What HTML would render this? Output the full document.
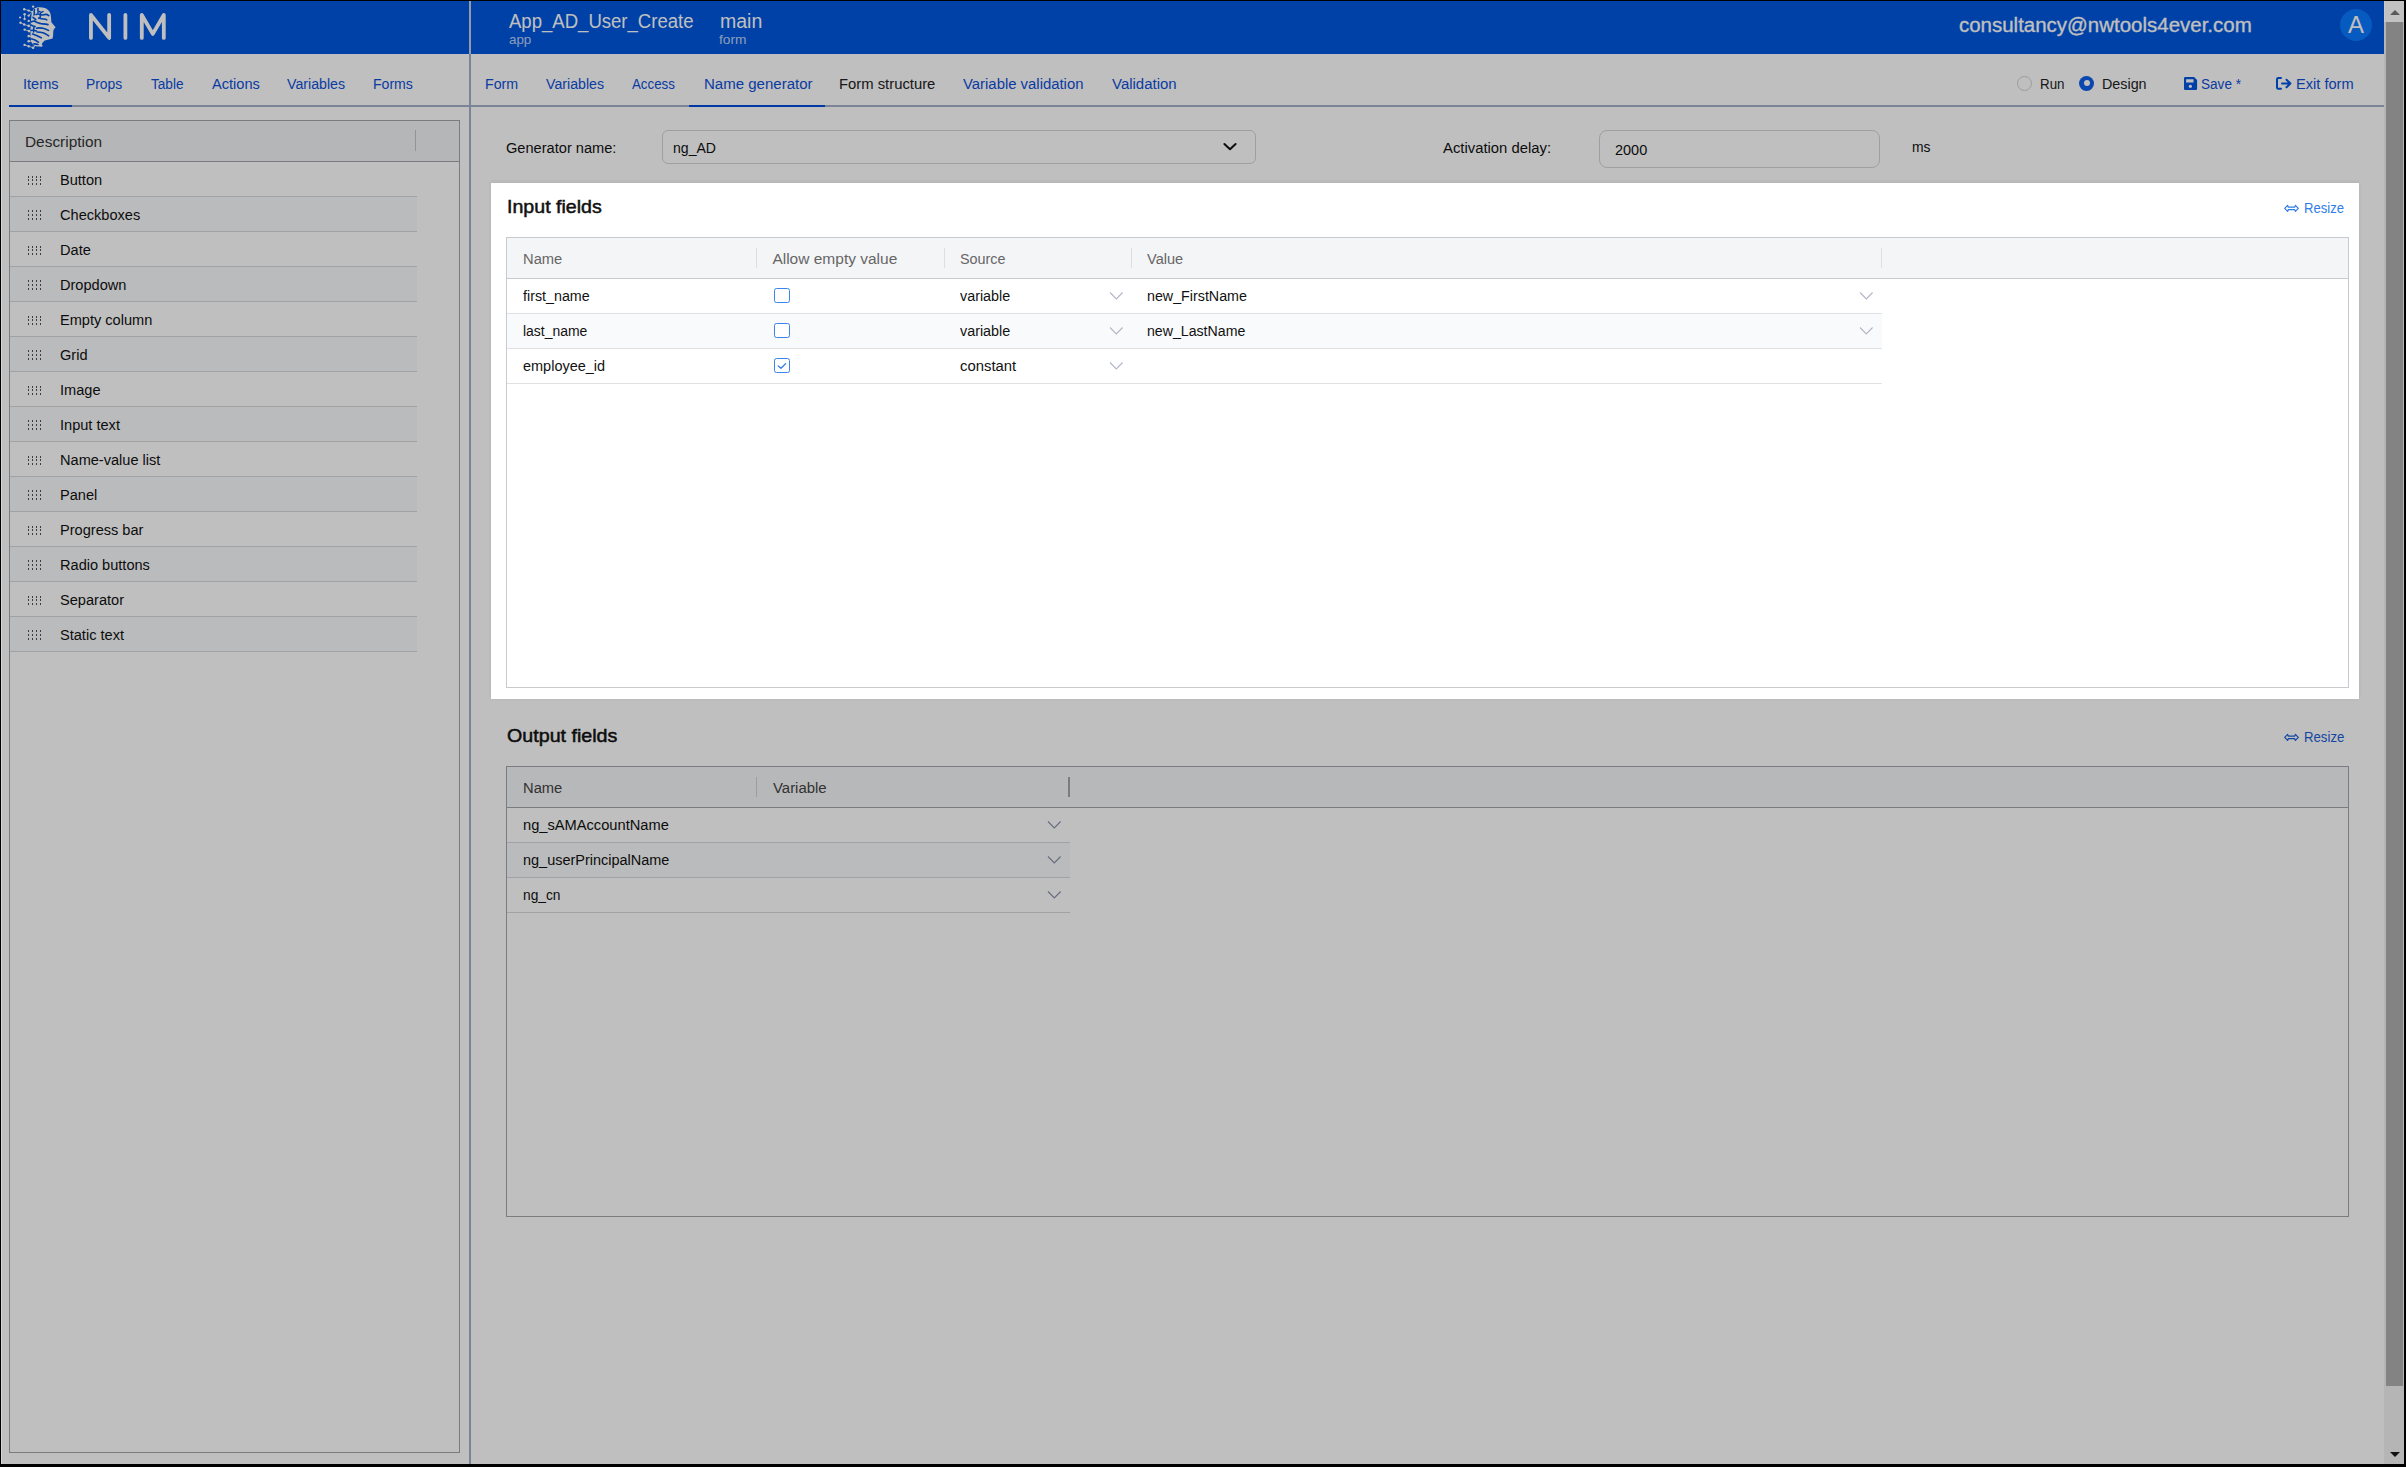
<!DOCTYPE html>
<html><head><meta charset="utf-8"><title>NIM</title>
<style>
html,body{margin:0;padding:0;}
body{width:2406px;height:1467px;background:#000;position:relative;overflow:hidden;font-family:"Liberation Sans",sans-serif;}
#pg{position:absolute;left:1px;top:1px;width:2403px;height:1463px;background:#fff;overflow:hidden;}
.r{position:absolute;box-sizing:content-box;}
.t{position:absolute;white-space:nowrap;line-height:20px;transform-origin:0 0;}
.ov{position:absolute;left:0;top:0;width:2406px;height:1467px;background:rgba(0,0,0,0.25);}
</style></head><body>
<div id="pg"></div>
<div class="r" style="left:1px;top:1px;width:2383px;height:53px;background:#0057e0"></div>
<svg class="r" style="left:0;top:0" width="200" height="56" viewBox="0 0 200 56">
<g fill="none" stroke="#fff" stroke-width="3.8" stroke-linecap="round" stroke-linejoin="round">
<polyline points="90.95,37.9 90.95,15 109.15,37.9 109.15,15"/>
<line x1="125.4" y1="15" x2="125.4" y2="37.9"/>
<polyline points="141.8,37.9 141.8,15 152.8,33.9 163.8,15 163.8,37.9"/>
</g>
<g fill="#fff">
<path d="M33.5,9 C36,6.8 41,6.6 45.5,8.2 C49.5,10 51,13.5 51,17.5 L51.4,22.3 L55.6,27.2 L53.7,29.4 L53.2,31.8 C53.3,34 53.1,36.8 52.6,38.4 L48.8,39.6 L44.8,40.6 L42.3,43 L41,46.5 L37,46.5 L33.5,45.5 L31,41.5 L30.5,36 L30.5,30 L30.8,22 L31.5,15 Z" />
<circle cx="33.1" cy="6.6" r="1.2"/><circle cx="24.2" cy="9.2" r="1.2"/><circle cx="28.7" cy="10.6" r="1.2"/><circle cx="32.7" cy="11.9" r="1.2"/>
<circle cx="24.6" cy="14.3" r="1.2"/><circle cx="28.7" cy="15.6" r="1.2"/><circle cx="20.1" cy="17.5" r="1.1"/><circle cx="24.6" cy="19" r="1.2"/>
<circle cx="28.7" cy="20.9" r="1.2"/><circle cx="20.5" cy="22.8" r="1.2"/><circle cx="24.2" cy="24.5" r="1.2"/><circle cx="28.7" cy="25.9" r="1.3"/>
<circle cx="24.6" cy="29.6" r="1.2"/><circle cx="29" cy="31.1" r="1.3"/><circle cx="28.7" cy="36.1" r="1.3"/><circle cx="28.7" cy="41.2" r="1.3"/>
<circle cx="24.6" cy="44.9" r="1.2"/><circle cx="28.7" cy="46.3" r="1.2"/><circle cx="33.1" cy="47.7" r="1.3"/><circle cx="41.3" cy="45.6" r="1.2"/>
</g>
<g stroke="#fff" stroke-width="0.8" fill="none">
<polyline points="24.2,9.2 28.7,10.6 32.7,11.9"/><polyline points="24.6,14.3 24.6,19"/><polyline points="28.7,15.6 32.7,11.9"/>
<polyline points="20.5,22.8 24.2,24.5 28.7,25.9"/><polyline points="24.6,29.6 29,31.1 32,30.5"/><polyline points="24.6,44.9 28.7,46.3 33.1,47.7 37,44"/>
<polyline points="28.7,36.1 32,37"/><polyline points="28.7,41.2 32,41"/>
</g>
<g stroke="#0057e0" stroke-width="1.6" fill="none" stroke-linecap="round">
<path d="M39.5,11.5 C40.5,12.5 42,12.3 43,11.5"/>
<path d="M36,14.5 C38,13 40,14.5 42,15 C44,15.2 45.5,12.8 48.8,15.6"/>
<path d="M38.5,18 C40,18.5 42,19 44,19 C45,19.1 46,19.4 46.8,19.9"/>
<path d="M33,17.3 L35.8,19.7"/>
<path d="M31,22 C32.5,21 33.5,21.5 34.4,21 C35.5,21.7 36.8,22.5 37.9,22.8 C39,23.2 40.2,23.6 41.3,23.8 C43.5,24 45.5,24.1 48,24.6"/>
<path d="M31,25 C32.5,26 33.5,26.3 35.1,26.5"/>
<path d="M36.5,28.2 C38,27.6 40,27.9 43,28.2 C45,28.5 46.5,29.3 48.6,30.4"/>
<path d="M31,30.5 C33,30 35,30.5 36.5,31"/>
<path d="M37,32 C39.5,32 41,32.2 43,32.7 C45,33.3 46.5,34.5 48.6,35.8"/>
<path d="M32.5,34 C34,34.5 36,35.3 37.2,35.7 C38.5,36.4 40,37.2 41.3,37.8"/>
<path d="M30,38.8 C31.5,39 33,39.4 34.4,39.8 C35.8,40.5 37.2,41.4 38.5,42.2"/>
<path d="M33.5,44 C35,43.5 36.5,44 38,44.5"/><path d="M34.5,9.5 C33.5,12 35,13 34,15"/><path d="M38,8.5 C37.5,10 38.5,11 38,12.5"/><path d="M34,27.5 C33,29 34.5,30 33.5,32"/><path d="M40.5,13.5 C39.8,15 40.8,16.2 40,17.5"/>
</g>
</svg>
<div class="r" style="left:469px;top:1px;width:2px;height:53px;background:#c9cedb"></div>
<div class="t" style="left:508.70px;top:11.24px;font-size:19.5px;color:#fff;transform:scaleX(0.9509);">App_AD_User_Create</div>
<div class="t" style="left:508.70px;top:30.02px;font-size:13.5px;color:rgba(255,255,255,0.74);transform:scaleX(0.9891);">app</div>
<div class="t" style="left:720.00px;top:11.24px;font-size:19.5px;color:#fff;">main</div>
<div class="t" style="left:719.40px;top:30.02px;font-size:13.5px;color:rgba(255,255,255,0.74);transform:scaleX(1.0185);">form</div>
<div class="t" style="left:1958.50px;top:14.77px;font-size:20px;color:#fff;transform:scaleX(1.0234);-webkit-text-stroke:0.3px #fff;">consultancy@nwtools4ever.com</div>
<div class="r" style="left:2340px;top:9px;width:32px;height:32px;border-radius:50%;background:#0a78ff"></div>
<div class="t" style="left:2348.20px;top:15.03px;font-size:23px;color:#fff;transform:scaleX(1.0383);">A</div>
<div class="r" style="left:469px;top:54px;width:2px;height:1410px;background:#a4afc8"></div>
<div class="r" style="left:9px;top:105px;width:460px;height:2px;background:#a4afc8"></div>
<div class="r" style="left:471px;top:105px;width:1913px;height:2px;background:#a4afc8"></div>
<div class="r" style="left:9px;top:105px;width:62.5px;height:2px;background:#004ddd"></div>
<div class="r" style="left:689px;top:105px;width:136px;height:2px;background:#004ddd"></div>
<div class="t" style="left:22.70px;top:73.63px;font-size:15.5px;color:#0d50d8;transform:scaleX(0.9367);">Items</div>
<div class="t" style="left:86.30px;top:73.63px;font-size:15.5px;color:#0d50d8;transform:scaleX(0.8948);">Props</div>
<div class="t" style="left:151.00px;top:73.63px;font-size:15.5px;color:#0d50d8;transform:scaleX(0.8773);">Table</div>
<div class="t" style="left:211.50px;top:73.63px;font-size:15.5px;color:#0d50d8;transform:scaleX(0.9422);">Actions</div>
<div class="t" style="left:287.30px;top:73.63px;font-size:15.5px;color:#0d50d8;transform:scaleX(0.9154);">Variables</div>
<div class="t" style="left:373.30px;top:73.63px;font-size:15.5px;color:#0d50d8;transform:scaleX(0.9080);">Forms</div>
<div class="t" style="left:485.00px;top:73.63px;font-size:15.5px;color:#0d50d8;transform:scaleX(0.9173);">Form</div>
<div class="t" style="left:546.30px;top:73.63px;font-size:15.5px;color:#0d50d8;transform:scaleX(0.9138);">Variables</div>
<div class="t" style="left:632.40px;top:73.63px;font-size:15.5px;color:#0d50d8;transform:scaleX(0.8582);">Access</div>
<div class="t" style="left:703.50px;top:73.63px;font-size:15.5px;color:#0d50d8;transform:scaleX(0.9689);">Name generator</div>
<div class="t" style="left:839.00px;top:73.63px;font-size:15.5px;color:#222;transform:scaleX(0.9558);">Form structure</div>
<div class="t" style="left:963.00px;top:73.63px;font-size:15.5px;color:#0d50d8;transform:scaleX(0.9598);">Variable validation</div>
<div class="t" style="left:1111.50px;top:73.63px;font-size:15.5px;color:#0d50d8;transform:scaleX(0.9662);">Validation</div>
<div class="t" style="left:2039.50px;top:73.63px;font-size:15.5px;color:#222;transform:scaleX(0.8614);">Run</div>
<div class="t" style="left:2102.40px;top:73.63px;font-size:15.5px;color:#222;transform:scaleX(0.9237);">Design</div>
<div class="t" style="left:2201.40px;top:73.63px;font-size:15.5px;color:#0d50d8;transform:scaleX(0.8763);">Save *</div>
<div class="t" style="left:2296.00px;top:73.63px;font-size:15.5px;color:#0d50d8;transform:scaleX(0.9420);">Exit form</div>
<div class="r" style="left:2016.8px;top:75.9px;width:13px;height:13px;border:1px solid #d0d0d0;border-radius:50%;background:#fff"></div>
<div class="r" style="left:2079px;top:75.9px;width:15px;height:15px;border-radius:50%;background:#0e5fe8"></div>
<div class="r" style="left:2083.5px;top:80.4px;width:6px;height:6px;border-radius:50%;background:#fff"></div>
<svg class="r" style="left:2184px;top:76.9px" width="14" height="13" viewBox="0 0 14 13">
<path fill="#0055e0" d="M1.2,0 H10 L13.1,3.1 V11.7 Q13.1,12.9 11.9,12.9 H1.2 Q0,12.9 0,11.7 V1.2 Q0,0 1.2,0 Z M2.1,2.3 V5.5 H9.5 V2.3 Z"/>
<circle cx="6.4" cy="9.3" r="1.6" fill="#fff"/>
</svg>
<svg class="r" style="left:2274px;top:75px" width="18" height="16" viewBox="0 0 18 16">
<g fill="none" stroke="#0055e0" stroke-width="2" stroke-linecap="round" stroke-linejoin="round">
<path d="M7,2.9 H4.3 Q3,2.9 3,4.2 V12.4 Q3,13.7 4.3,13.7 H7"/>
<path d="M8,8.5 H16.4 M12.5,4.8 L16.4,8.5 L12.5,12.2"/>
</g></svg>
<div class="r" style="left:9px;top:120px;width:449px;height:1331px;border:1px solid #a3a6aa;background:#fff"></div>
<div class="r" style="left:10px;top:121px;width:449px;height:40px;background:#f2f3f5"></div>
<div class="r" style="left:10px;top:161px;width:449px;height:1px;background:#a3a6aa"></div>
<div class="r" style="left:415px;top:130px;width:1px;height:21px;background:#c4c6ca"></div>
<div class="t" style="left:25.00px;top:132.03px;font-size:15.5px;color:#333;transform:scaleX(0.9935);">Description</div>
<div class="r" style="left:10px;top:196px;width:407px;height:1px;background:#d6d8db"></div>
<div class="r" style="left:28px;top:176px;width:1px;height:2px;background:#505050"></div>
<div class="r" style="left:28px;top:179px;width:1px;height:2px;background:#505050"></div>
<div class="r" style="left:28px;top:183px;width:1px;height:2px;background:#505050"></div>
<div class="r" style="left:32px;top:176px;width:1px;height:2px;background:#505050"></div>
<div class="r" style="left:32px;top:179px;width:1px;height:2px;background:#505050"></div>
<div class="r" style="left:32px;top:183px;width:1px;height:2px;background:#505050"></div>
<div class="r" style="left:36px;top:176px;width:1px;height:2px;background:#505050"></div>
<div class="r" style="left:36px;top:179px;width:1px;height:2px;background:#505050"></div>
<div class="r" style="left:36px;top:183px;width:1px;height:2px;background:#505050"></div>
<div class="r" style="left:40px;top:176px;width:1px;height:2px;background:#505050"></div>
<div class="r" style="left:40px;top:179px;width:1px;height:2px;background:#505050"></div>
<div class="r" style="left:40px;top:183px;width:1px;height:2px;background:#505050"></div>
<div class="t" style="left:59.80px;top:170.13px;font-size:15.5px;color:#111;transform:scaleX(0.9400);">Button</div>
<div class="r" style="left:10px;top:197px;width:407px;height:34px;background:#f9fafb"></div>
<div class="r" style="left:10px;top:231px;width:407px;height:1px;background:#d6d8db"></div>
<div class="r" style="left:28px;top:210px;width:1px;height:2px;background:#505050"></div>
<div class="r" style="left:28px;top:214px;width:1px;height:2px;background:#505050"></div>
<div class="r" style="left:28px;top:218px;width:1px;height:2px;background:#505050"></div>
<div class="r" style="left:32px;top:210px;width:1px;height:2px;background:#505050"></div>
<div class="r" style="left:32px;top:214px;width:1px;height:2px;background:#505050"></div>
<div class="r" style="left:32px;top:218px;width:1px;height:2px;background:#505050"></div>
<div class="r" style="left:36px;top:210px;width:1px;height:2px;background:#505050"></div>
<div class="r" style="left:36px;top:214px;width:1px;height:2px;background:#505050"></div>
<div class="r" style="left:36px;top:218px;width:1px;height:2px;background:#505050"></div>
<div class="r" style="left:40px;top:210px;width:1px;height:2px;background:#505050"></div>
<div class="r" style="left:40px;top:214px;width:1px;height:2px;background:#505050"></div>
<div class="r" style="left:40px;top:218px;width:1px;height:2px;background:#505050"></div>
<div class="t" style="left:59.80px;top:205.13px;font-size:15.5px;color:#111;transform:scaleX(0.9400);">Checkboxes</div>
<div class="r" style="left:10px;top:266px;width:407px;height:1px;background:#d6d8db"></div>
<div class="r" style="left:28px;top:246px;width:1px;height:2px;background:#505050"></div>
<div class="r" style="left:28px;top:249px;width:1px;height:2px;background:#505050"></div>
<div class="r" style="left:28px;top:253px;width:1px;height:2px;background:#505050"></div>
<div class="r" style="left:32px;top:246px;width:1px;height:2px;background:#505050"></div>
<div class="r" style="left:32px;top:249px;width:1px;height:2px;background:#505050"></div>
<div class="r" style="left:32px;top:253px;width:1px;height:2px;background:#505050"></div>
<div class="r" style="left:36px;top:246px;width:1px;height:2px;background:#505050"></div>
<div class="r" style="left:36px;top:249px;width:1px;height:2px;background:#505050"></div>
<div class="r" style="left:36px;top:253px;width:1px;height:2px;background:#505050"></div>
<div class="r" style="left:40px;top:246px;width:1px;height:2px;background:#505050"></div>
<div class="r" style="left:40px;top:249px;width:1px;height:2px;background:#505050"></div>
<div class="r" style="left:40px;top:253px;width:1px;height:2px;background:#505050"></div>
<div class="t" style="left:59.80px;top:240.13px;font-size:15.5px;color:#111;transform:scaleX(0.9400);">Date</div>
<div class="r" style="left:10px;top:267px;width:407px;height:34px;background:#f9fafb"></div>
<div class="r" style="left:10px;top:301px;width:407px;height:1px;background:#d6d8db"></div>
<div class="r" style="left:28px;top:280px;width:1px;height:2px;background:#505050"></div>
<div class="r" style="left:28px;top:284px;width:1px;height:2px;background:#505050"></div>
<div class="r" style="left:28px;top:288px;width:1px;height:2px;background:#505050"></div>
<div class="r" style="left:32px;top:280px;width:1px;height:2px;background:#505050"></div>
<div class="r" style="left:32px;top:284px;width:1px;height:2px;background:#505050"></div>
<div class="r" style="left:32px;top:288px;width:1px;height:2px;background:#505050"></div>
<div class="r" style="left:36px;top:280px;width:1px;height:2px;background:#505050"></div>
<div class="r" style="left:36px;top:284px;width:1px;height:2px;background:#505050"></div>
<div class="r" style="left:36px;top:288px;width:1px;height:2px;background:#505050"></div>
<div class="r" style="left:40px;top:280px;width:1px;height:2px;background:#505050"></div>
<div class="r" style="left:40px;top:284px;width:1px;height:2px;background:#505050"></div>
<div class="r" style="left:40px;top:288px;width:1px;height:2px;background:#505050"></div>
<div class="t" style="left:59.80px;top:275.13px;font-size:15.5px;color:#111;transform:scaleX(0.9400);">Dropdown</div>
<div class="r" style="left:10px;top:336px;width:407px;height:1px;background:#d6d8db"></div>
<div class="r" style="left:28px;top:316px;width:1px;height:2px;background:#505050"></div>
<div class="r" style="left:28px;top:319px;width:1px;height:2px;background:#505050"></div>
<div class="r" style="left:28px;top:323px;width:1px;height:2px;background:#505050"></div>
<div class="r" style="left:32px;top:316px;width:1px;height:2px;background:#505050"></div>
<div class="r" style="left:32px;top:319px;width:1px;height:2px;background:#505050"></div>
<div class="r" style="left:32px;top:323px;width:1px;height:2px;background:#505050"></div>
<div class="r" style="left:36px;top:316px;width:1px;height:2px;background:#505050"></div>
<div class="r" style="left:36px;top:319px;width:1px;height:2px;background:#505050"></div>
<div class="r" style="left:36px;top:323px;width:1px;height:2px;background:#505050"></div>
<div class="r" style="left:40px;top:316px;width:1px;height:2px;background:#505050"></div>
<div class="r" style="left:40px;top:319px;width:1px;height:2px;background:#505050"></div>
<div class="r" style="left:40px;top:323px;width:1px;height:2px;background:#505050"></div>
<div class="t" style="left:59.80px;top:310.13px;font-size:15.5px;color:#111;transform:scaleX(0.9400);">Empty column</div>
<div class="r" style="left:10px;top:337px;width:407px;height:34px;background:#f9fafb"></div>
<div class="r" style="left:10px;top:371px;width:407px;height:1px;background:#d6d8db"></div>
<div class="r" style="left:28px;top:350px;width:1px;height:2px;background:#505050"></div>
<div class="r" style="left:28px;top:354px;width:1px;height:2px;background:#505050"></div>
<div class="r" style="left:28px;top:358px;width:1px;height:2px;background:#505050"></div>
<div class="r" style="left:32px;top:350px;width:1px;height:2px;background:#505050"></div>
<div class="r" style="left:32px;top:354px;width:1px;height:2px;background:#505050"></div>
<div class="r" style="left:32px;top:358px;width:1px;height:2px;background:#505050"></div>
<div class="r" style="left:36px;top:350px;width:1px;height:2px;background:#505050"></div>
<div class="r" style="left:36px;top:354px;width:1px;height:2px;background:#505050"></div>
<div class="r" style="left:36px;top:358px;width:1px;height:2px;background:#505050"></div>
<div class="r" style="left:40px;top:350px;width:1px;height:2px;background:#505050"></div>
<div class="r" style="left:40px;top:354px;width:1px;height:2px;background:#505050"></div>
<div class="r" style="left:40px;top:358px;width:1px;height:2px;background:#505050"></div>
<div class="t" style="left:59.80px;top:345.13px;font-size:15.5px;color:#111;transform:scaleX(0.9400);">Grid</div>
<div class="r" style="left:10px;top:406px;width:407px;height:1px;background:#d6d8db"></div>
<div class="r" style="left:28px;top:386px;width:1px;height:2px;background:#505050"></div>
<div class="r" style="left:28px;top:389px;width:1px;height:2px;background:#505050"></div>
<div class="r" style="left:28px;top:393px;width:1px;height:2px;background:#505050"></div>
<div class="r" style="left:32px;top:386px;width:1px;height:2px;background:#505050"></div>
<div class="r" style="left:32px;top:389px;width:1px;height:2px;background:#505050"></div>
<div class="r" style="left:32px;top:393px;width:1px;height:2px;background:#505050"></div>
<div class="r" style="left:36px;top:386px;width:1px;height:2px;background:#505050"></div>
<div class="r" style="left:36px;top:389px;width:1px;height:2px;background:#505050"></div>
<div class="r" style="left:36px;top:393px;width:1px;height:2px;background:#505050"></div>
<div class="r" style="left:40px;top:386px;width:1px;height:2px;background:#505050"></div>
<div class="r" style="left:40px;top:389px;width:1px;height:2px;background:#505050"></div>
<div class="r" style="left:40px;top:393px;width:1px;height:2px;background:#505050"></div>
<div class="t" style="left:59.80px;top:380.13px;font-size:15.5px;color:#111;transform:scaleX(0.9400);">Image</div>
<div class="r" style="left:10px;top:407px;width:407px;height:34px;background:#f9fafb"></div>
<div class="r" style="left:10px;top:441px;width:407px;height:1px;background:#d6d8db"></div>
<div class="r" style="left:28px;top:420px;width:1px;height:2px;background:#505050"></div>
<div class="r" style="left:28px;top:424px;width:1px;height:2px;background:#505050"></div>
<div class="r" style="left:28px;top:428px;width:1px;height:2px;background:#505050"></div>
<div class="r" style="left:32px;top:420px;width:1px;height:2px;background:#505050"></div>
<div class="r" style="left:32px;top:424px;width:1px;height:2px;background:#505050"></div>
<div class="r" style="left:32px;top:428px;width:1px;height:2px;background:#505050"></div>
<div class="r" style="left:36px;top:420px;width:1px;height:2px;background:#505050"></div>
<div class="r" style="left:36px;top:424px;width:1px;height:2px;background:#505050"></div>
<div class="r" style="left:36px;top:428px;width:1px;height:2px;background:#505050"></div>
<div class="r" style="left:40px;top:420px;width:1px;height:2px;background:#505050"></div>
<div class="r" style="left:40px;top:424px;width:1px;height:2px;background:#505050"></div>
<div class="r" style="left:40px;top:428px;width:1px;height:2px;background:#505050"></div>
<div class="t" style="left:59.80px;top:415.13px;font-size:15.5px;color:#111;transform:scaleX(0.9400);">Input text</div>
<div class="r" style="left:10px;top:476px;width:407px;height:1px;background:#d6d8db"></div>
<div class="r" style="left:28px;top:456px;width:1px;height:2px;background:#505050"></div>
<div class="r" style="left:28px;top:459px;width:1px;height:2px;background:#505050"></div>
<div class="r" style="left:28px;top:463px;width:1px;height:2px;background:#505050"></div>
<div class="r" style="left:32px;top:456px;width:1px;height:2px;background:#505050"></div>
<div class="r" style="left:32px;top:459px;width:1px;height:2px;background:#505050"></div>
<div class="r" style="left:32px;top:463px;width:1px;height:2px;background:#505050"></div>
<div class="r" style="left:36px;top:456px;width:1px;height:2px;background:#505050"></div>
<div class="r" style="left:36px;top:459px;width:1px;height:2px;background:#505050"></div>
<div class="r" style="left:36px;top:463px;width:1px;height:2px;background:#505050"></div>
<div class="r" style="left:40px;top:456px;width:1px;height:2px;background:#505050"></div>
<div class="r" style="left:40px;top:459px;width:1px;height:2px;background:#505050"></div>
<div class="r" style="left:40px;top:463px;width:1px;height:2px;background:#505050"></div>
<div class="t" style="left:59.80px;top:450.13px;font-size:15.5px;color:#111;transform:scaleX(0.9400);">Name-value list</div>
<div class="r" style="left:10px;top:477px;width:407px;height:34px;background:#f9fafb"></div>
<div class="r" style="left:10px;top:511px;width:407px;height:1px;background:#d6d8db"></div>
<div class="r" style="left:28px;top:490px;width:1px;height:2px;background:#505050"></div>
<div class="r" style="left:28px;top:494px;width:1px;height:2px;background:#505050"></div>
<div class="r" style="left:28px;top:498px;width:1px;height:2px;background:#505050"></div>
<div class="r" style="left:32px;top:490px;width:1px;height:2px;background:#505050"></div>
<div class="r" style="left:32px;top:494px;width:1px;height:2px;background:#505050"></div>
<div class="r" style="left:32px;top:498px;width:1px;height:2px;background:#505050"></div>
<div class="r" style="left:36px;top:490px;width:1px;height:2px;background:#505050"></div>
<div class="r" style="left:36px;top:494px;width:1px;height:2px;background:#505050"></div>
<div class="r" style="left:36px;top:498px;width:1px;height:2px;background:#505050"></div>
<div class="r" style="left:40px;top:490px;width:1px;height:2px;background:#505050"></div>
<div class="r" style="left:40px;top:494px;width:1px;height:2px;background:#505050"></div>
<div class="r" style="left:40px;top:498px;width:1px;height:2px;background:#505050"></div>
<div class="t" style="left:59.80px;top:485.13px;font-size:15.5px;color:#111;transform:scaleX(0.9400);">Panel</div>
<div class="r" style="left:10px;top:546px;width:407px;height:1px;background:#d6d8db"></div>
<div class="r" style="left:28px;top:526px;width:1px;height:2px;background:#505050"></div>
<div class="r" style="left:28px;top:529px;width:1px;height:2px;background:#505050"></div>
<div class="r" style="left:28px;top:533px;width:1px;height:2px;background:#505050"></div>
<div class="r" style="left:32px;top:526px;width:1px;height:2px;background:#505050"></div>
<div class="r" style="left:32px;top:529px;width:1px;height:2px;background:#505050"></div>
<div class="r" style="left:32px;top:533px;width:1px;height:2px;background:#505050"></div>
<div class="r" style="left:36px;top:526px;width:1px;height:2px;background:#505050"></div>
<div class="r" style="left:36px;top:529px;width:1px;height:2px;background:#505050"></div>
<div class="r" style="left:36px;top:533px;width:1px;height:2px;background:#505050"></div>
<div class="r" style="left:40px;top:526px;width:1px;height:2px;background:#505050"></div>
<div class="r" style="left:40px;top:529px;width:1px;height:2px;background:#505050"></div>
<div class="r" style="left:40px;top:533px;width:1px;height:2px;background:#505050"></div>
<div class="t" style="left:59.80px;top:520.13px;font-size:15.5px;color:#111;transform:scaleX(0.9400);">Progress bar</div>
<div class="r" style="left:10px;top:547px;width:407px;height:34px;background:#f9fafb"></div>
<div class="r" style="left:10px;top:581px;width:407px;height:1px;background:#d6d8db"></div>
<div class="r" style="left:28px;top:560px;width:1px;height:2px;background:#505050"></div>
<div class="r" style="left:28px;top:564px;width:1px;height:2px;background:#505050"></div>
<div class="r" style="left:28px;top:568px;width:1px;height:2px;background:#505050"></div>
<div class="r" style="left:32px;top:560px;width:1px;height:2px;background:#505050"></div>
<div class="r" style="left:32px;top:564px;width:1px;height:2px;background:#505050"></div>
<div class="r" style="left:32px;top:568px;width:1px;height:2px;background:#505050"></div>
<div class="r" style="left:36px;top:560px;width:1px;height:2px;background:#505050"></div>
<div class="r" style="left:36px;top:564px;width:1px;height:2px;background:#505050"></div>
<div class="r" style="left:36px;top:568px;width:1px;height:2px;background:#505050"></div>
<div class="r" style="left:40px;top:560px;width:1px;height:2px;background:#505050"></div>
<div class="r" style="left:40px;top:564px;width:1px;height:2px;background:#505050"></div>
<div class="r" style="left:40px;top:568px;width:1px;height:2px;background:#505050"></div>
<div class="t" style="left:59.80px;top:555.13px;font-size:15.5px;color:#111;transform:scaleX(0.9400);">Radio buttons</div>
<div class="r" style="left:10px;top:616px;width:407px;height:1px;background:#d6d8db"></div>
<div class="r" style="left:28px;top:596px;width:1px;height:2px;background:#505050"></div>
<div class="r" style="left:28px;top:599px;width:1px;height:2px;background:#505050"></div>
<div class="r" style="left:28px;top:603px;width:1px;height:2px;background:#505050"></div>
<div class="r" style="left:32px;top:596px;width:1px;height:2px;background:#505050"></div>
<div class="r" style="left:32px;top:599px;width:1px;height:2px;background:#505050"></div>
<div class="r" style="left:32px;top:603px;width:1px;height:2px;background:#505050"></div>
<div class="r" style="left:36px;top:596px;width:1px;height:2px;background:#505050"></div>
<div class="r" style="left:36px;top:599px;width:1px;height:2px;background:#505050"></div>
<div class="r" style="left:36px;top:603px;width:1px;height:2px;background:#505050"></div>
<div class="r" style="left:40px;top:596px;width:1px;height:2px;background:#505050"></div>
<div class="r" style="left:40px;top:599px;width:1px;height:2px;background:#505050"></div>
<div class="r" style="left:40px;top:603px;width:1px;height:2px;background:#505050"></div>
<div class="t" style="left:59.80px;top:590.13px;font-size:15.5px;color:#111;transform:scaleX(0.9400);">Separator</div>
<div class="r" style="left:10px;top:617px;width:407px;height:34px;background:#f9fafb"></div>
<div class="r" style="left:10px;top:651px;width:407px;height:1px;background:#d6d8db"></div>
<div class="r" style="left:28px;top:630px;width:1px;height:2px;background:#505050"></div>
<div class="r" style="left:28px;top:634px;width:1px;height:2px;background:#505050"></div>
<div class="r" style="left:28px;top:638px;width:1px;height:2px;background:#505050"></div>
<div class="r" style="left:32px;top:630px;width:1px;height:2px;background:#505050"></div>
<div class="r" style="left:32px;top:634px;width:1px;height:2px;background:#505050"></div>
<div class="r" style="left:32px;top:638px;width:1px;height:2px;background:#505050"></div>
<div class="r" style="left:36px;top:630px;width:1px;height:2px;background:#505050"></div>
<div class="r" style="left:36px;top:634px;width:1px;height:2px;background:#505050"></div>
<div class="r" style="left:36px;top:638px;width:1px;height:2px;background:#505050"></div>
<div class="r" style="left:40px;top:630px;width:1px;height:2px;background:#505050"></div>
<div class="r" style="left:40px;top:634px;width:1px;height:2px;background:#505050"></div>
<div class="r" style="left:40px;top:638px;width:1px;height:2px;background:#505050"></div>
<div class="t" style="left:59.80px;top:625.13px;font-size:15.5px;color:#111;transform:scaleX(0.9400);">Static text</div>
<div class="t" style="left:506.20px;top:137.63px;font-size:15.5px;color:#111;transform:scaleX(0.9421);">Generator name:</div>
<div class="r" style="left:662px;top:130px;width:592px;height:32px;border:1px solid #d4d4d4;border-radius:6px;background:#fff"></div>
<div class="t" style="left:673.30px;top:137.63px;font-size:15.5px;color:#111;transform:scaleX(0.9066);">ng_AD</div>
<svg class="r" style="left:1221px;top:140px" width="18" height="12" viewBox="0 0 18 12">
<polyline points="3.4,4 9,9.3 14.6,4" fill="none" stroke="#111" stroke-width="2" stroke-linecap="round" stroke-linejoin="round"/></svg>
<div class="t" style="left:1443.00px;top:137.63px;font-size:15.5px;color:#111;transform:scaleX(0.9571);">Activation delay:</div>
<div class="r" style="left:1599px;top:130px;width:279px;height:36px;border:1px solid #d4d4d4;border-radius:8px;background:#fff"></div>
<div class="t" style="left:1614.50px;top:139.63px;font-size:15.5px;color:#111;transform:scaleX(0.9337);">2000</div>
<div class="t" style="left:1911.50px;top:137.33px;font-size:15.5px;color:#111;transform:scaleX(0.8940);">ms</div>
<div class="t" style="left:506.80px;top:725.99px;font-size:18.5px;color:#111;transform:scaleX(1.0628);-webkit-text-stroke:0.5px #111;">Output fields</div>
<svg class="r" style="left:2284px;top:733px" width="17" height="10" viewBox="0 0 17 10"><path d="M0.7,4.4 L3.6,1.4 L4.4,3.2 H10.6 L11.4,1.4 L14.3,4.4 L11.4,7.4 L10.6,5.6 H4.4 L3.6,7.4 Z" fill="none" stroke="#1a5ed8" stroke-width="1.2" stroke-linejoin="round"/></svg>
<div class="t" style="left:2303.50px;top:727.13px;font-size:15.5px;color:#1a5ed8;transform:scaleX(0.8511);">Resize</div>
<div class="r" style="left:506px;top:766px;width:1841px;height:449px;border:1px solid #a3a6aa;background:#fff"></div>
<div class="r" style="left:507px;top:767px;width:1841px;height:40px;background:#f5f6f8"></div>
<div class="r" style="left:507px;top:807px;width:1841px;height:1px;background:#a3a6aa"></div>
<div class="r" style="left:756px;top:777px;width:1px;height:20px;background:#d0d2d6"></div>
<div class="r" style="left:1068px;top:777px;width:2px;height:20px;background:#a3a6aa"></div>
<div class="t" style="left:522.70px;top:777.63px;font-size:15.5px;color:#444;transform:scaleX(0.9496);">Name</div>
<div class="t" style="left:772.60px;top:777.63px;font-size:15.5px;color:#444;transform:scaleX(0.9619);">Variable</div>
<div class="r" style="left:507px;top:842px;width:563px;height:1px;background:#d6d8db"></div>
<div class="t" style="left:522.70px;top:815.33px;font-size:15.5px;color:#111;transform:scaleX(0.9454);">ng_sAMAccountName</div>
<svg class="r" style="left:1047px;top:820px" width="15" height="10" viewBox="0 0 15 10"><polyline points="1,1.5 7.3,8 13.6,1.5" fill="none" stroke="#8890a8" stroke-width="1.1"/></svg>
<div class="r" style="left:507px;top:843px;width:563px;height:34px;background:#f9fafb"></div>
<div class="r" style="left:507px;top:877px;width:563px;height:1px;background:#d6d8db"></div>
<div class="t" style="left:522.70px;top:850.33px;font-size:15.5px;color:#111;transform:scaleX(0.9338);">ng_userPrincipalName</div>
<svg class="r" style="left:1047px;top:855px" width="15" height="10" viewBox="0 0 15 10"><polyline points="1,1.5 7.3,8 13.6,1.5" fill="none" stroke="#8890a8" stroke-width="1.1"/></svg>
<div class="r" style="left:507px;top:912px;width:563px;height:1px;background:#d6d8db"></div>
<div class="t" style="left:522.70px;top:885.33px;font-size:15.5px;color:#111;transform:scaleX(0.8878);">ng_cn</div>
<svg class="r" style="left:1047px;top:890px" width="15" height="10" viewBox="0 0 15 10"><polyline points="1,1.5 7.3,8 13.6,1.5" fill="none" stroke="#8890a8" stroke-width="1.1"/></svg>
<div class="ov"></div>
<div class="r" style="left:491px;top:183px;width:1868px;height:516px;background:#fff;box-shadow:0 -1px 4px rgba(0,0,0,0.07)"></div>
<div class="t" style="left:506.80px;top:196.89px;font-size:18.5px;color:#111;transform:scaleX(1.0598);-webkit-text-stroke:0.5px #111;">Input fields</div>
<svg class="r" style="left:2284px;top:204px" width="17" height="10" viewBox="0 0 17 10"><path d="M0.7,4.4 L3.6,1.4 L4.4,3.2 H10.6 L11.4,1.4 L14.3,4.4 L11.4,7.4 L10.6,5.6 H4.4 L3.6,7.4 Z" fill="none" stroke="#2e7de8" stroke-width="1.2" stroke-linejoin="round"/></svg>
<div class="t" style="left:2303.90px;top:198.43px;font-size:15.5px;color:#2e7de8;transform:scaleX(0.8426);">Resize</div>
<div class="r" style="left:506px;top:237px;width:1841px;height:449px;border:1px solid #c8cacd;background:#fff"></div>
<div class="r" style="left:507px;top:238px;width:1841px;height:40px;background:#f4f5f7"></div>
<div class="r" style="left:507px;top:278px;width:1841px;height:1px;background:#c8cacd"></div>
<div class="r" style="left:756px;top:248px;width:1px;height:20px;background:#dcdee1"></div>
<div class="r" style="left:944px;top:248px;width:1px;height:20px;background:#dcdee1"></div>
<div class="r" style="left:1131px;top:248px;width:1px;height:20px;background:#dcdee1"></div>
<div class="r" style="left:1881px;top:248px;width:1px;height:20px;background:#dcdee1"></div>
<div class="t" style="left:522.70px;top:249.13px;font-size:15.5px;color:#666;transform:scaleX(0.9496);">Name</div>
<div class="t" style="left:772.40px;top:249.13px;font-size:15.5px;color:#666;">Allow empty value</div>
<div class="t" style="left:959.80px;top:249.13px;font-size:15.5px;color:#666;transform:scaleX(0.9260);">Source</div>
<div class="t" style="left:1147.40px;top:249.13px;font-size:15.5px;color:#666;transform:scaleX(0.9398);">Value</div>
<div class="r" style="left:507px;top:313px;width:1375px;height:1px;background:#dfe1e4"></div>
<div class="t" style="left:522.70px;top:286.23px;font-size:15.5px;color:#111;transform:scaleX(0.9215);">first_name</div>
<div class="r" style="left:774px;top:287.5px;width:13.6px;height:13.6px;border:1.2px solid #3a84ee;border-radius:2.5px;background:#fff"></div>
<div class="t" style="left:959.80px;top:286.23px;font-size:15.5px;color:#111;transform:scaleX(0.9253);">variable</div>
<svg class="r" style="left:1109px;top:291px" width="15" height="10" viewBox="0 0 15 10"><polyline points="1,1.5 7.3,8 13.6,1.5" fill="none" stroke="#b2b5c6" stroke-width="1.1"/></svg>
<div class="t" style="left:1147.40px;top:286.23px;font-size:15.5px;color:#111;transform:scaleX(0.9207);">new_FirstName</div>
<svg class="r" style="left:1859px;top:291px" width="15" height="10" viewBox="0 0 15 10"><polyline points="1,1.5 7.3,8 13.6,1.5" fill="none" stroke="#b2b5c6" stroke-width="1.1"/></svg>
<div class="r" style="left:507px;top:314px;width:1375px;height:34px;background:#f9fafb"></div>
<div class="r" style="left:507px;top:348px;width:1375px;height:1px;background:#dfe1e4"></div>
<div class="t" style="left:522.70px;top:321.23px;font-size:15.5px;color:#111;transform:scaleX(0.9003);">last_name</div>
<div class="r" style="left:774px;top:322.5px;width:13.6px;height:13.6px;border:1.2px solid #3a84ee;border-radius:2.5px;background:#fff"></div>
<div class="t" style="left:959.80px;top:321.23px;font-size:15.5px;color:#111;transform:scaleX(0.9253);">variable</div>
<svg class="r" style="left:1109px;top:326px" width="15" height="10" viewBox="0 0 15 10"><polyline points="1,1.5 7.3,8 13.6,1.5" fill="none" stroke="#b2b5c6" stroke-width="1.1"/></svg>
<div class="t" style="left:1147.40px;top:321.23px;font-size:15.5px;color:#111;transform:scaleX(0.9125);">new_LastName</div>
<svg class="r" style="left:1859px;top:326px" width="15" height="10" viewBox="0 0 15 10"><polyline points="1,1.5 7.3,8 13.6,1.5" fill="none" stroke="#b2b5c6" stroke-width="1.1"/></svg>
<div class="r" style="left:507px;top:383px;width:1375px;height:1px;background:#dfe1e4"></div>
<div class="t" style="left:522.70px;top:356.23px;font-size:15.5px;color:#111;transform:scaleX(0.9342);">employee_id</div>
<div class="r" style="left:774px;top:357.5px;width:13.6px;height:13.6px;border:1.2px solid #3a84ee;border-radius:2.5px;background:#fff"></div>
<svg class="r" style="left:774px;top:357.5px" width="16" height="16" viewBox="0 0 16 16"><polyline points="4.3,8 7,10.2 11.6,5.6" fill="none" stroke="#2f7ae5" stroke-width="1.3" stroke-linecap="round" stroke-linejoin="round"/></svg>
<div class="t" style="left:959.80px;top:356.23px;font-size:15.5px;color:#111;transform:scaleX(0.9592);">constant</div>
<svg class="r" style="left:1109px;top:361px" width="15" height="10" viewBox="0 0 15 10"><polyline points="1,1.5 7.3,8 13.6,1.5" fill="none" stroke="#b2b5c6" stroke-width="1.1"/></svg>
<div class="r" style="left:1px;top:54px;width:1px;height:1410px;background:rgba(255,255,255,0.35)"></div>
<div class="r" style="left:2384px;top:1px;width:20px;height:1463px;background:#b5b5b5"></div>
<div class="r" style="left:2384px;top:1px;width:20px;height:21px;background:#c2c2c2"></div>
<div class="r" style="left:2384px;top:1px;width:1px;height:21px;background:#cacaca"></div>
<div class="r" style="left:2386px;top:22px;width:17px;height:1364px;background:#838383"></div>
<svg class="r" style="left:2388px;top:8px" width="14" height="10" viewBox="0 0 14 10"><polygon points="2,7 7,2 12,7" fill="#5a5a5a"/></svg>
<svg class="r" style="left:2388px;top:1450px" width="14" height="10" viewBox="0 0 14 10"><polygon points="2,2 7,7 12,2" fill="#111"/></svg>
</body></html>
